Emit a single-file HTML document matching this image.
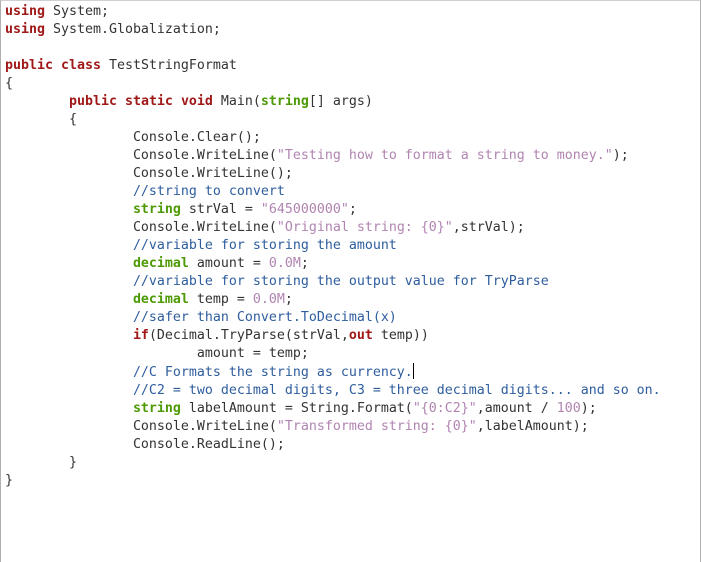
<!DOCTYPE html>
<html><head><meta charset="utf-8"><style>
html,body{margin:0;padding:0;background:#fff;}
body{width:701px;height:561px;overflow:hidden;position:relative;}
.frame{position:absolute;left:0;top:0;width:699px;height:561px;border-left:1px solid #b0b0b0;border-right:1px solid #b0b0b0;border-top:1px solid #d0d0d0;box-sizing:content-box;}
pre{margin:0;position:absolute;left:5px;top:3px;font-family:"DejaVu Sans Mono","Liberation Mono",monospace;font-size:13.29px;line-height:18px;color:#333;tab-size:8;-moz-tab-size:8;}
.k{color:#a01818;font-weight:bold;}
.t{color:#4e9a06;font-weight:bold;}
.c{color:#2e5d9e;}
.s{color:#b184b1;}
.cur{display:inline-block;width:1px;height:16px;background:#000;vertical-align:-3px;}
</style></head><body><div class="frame"></div><pre><span class="k">using</span> System;
<span class="k">using</span> System.Globalization;

<span class="k">public</span> <span class="k">class</span> TestStringFormat
{
	<span class="k">public</span> <span class="k">static</span> <span class="k">void</span> Main(<span class="t">string</span>[] args)
	{
		Console.Clear();
		Console.WriteLine(<span class="s">"Testing how to format a string to money."</span>);
		Console.WriteLine();
		<span class="c">//string to convert</span>
		<span class="t">string</span> strVal = <span class="s">"645000000"</span>;
		Console.WriteLine(<span class="s">"Original string: {0}"</span>,strVal);
		<span class="c">//variable for storing the amount</span>
		<span class="t">decimal</span> amount = <span class="s">0.0M</span>;
		<span class="c">//variable for storing the output value for TryParse</span>
		<span class="t">decimal</span> temp = <span class="s">0.0M</span>;
		<span class="c">//safer than Convert.ToDecimal(x)</span>
		<span class="k">if</span>(Decimal.TryParse(strVal,<span class="k">out</span> temp))
			amount = temp;
		<span class="c">//C Formats the string as currency.</span><span class="cur"></span>
		<span class="c">//C2 = two decimal digits, C3 = three decimal digits... and so on.</span>
		<span class="t">string</span> labelAmount = String.Format(<span class="s">"{0:C2}"</span>,amount / <span class="s">100</span>);
		Console.WriteLine(<span class="s">"Transformed string: {0}"</span>,labelAmount);
		Console.ReadLine();
	}
}</pre></body></html>
